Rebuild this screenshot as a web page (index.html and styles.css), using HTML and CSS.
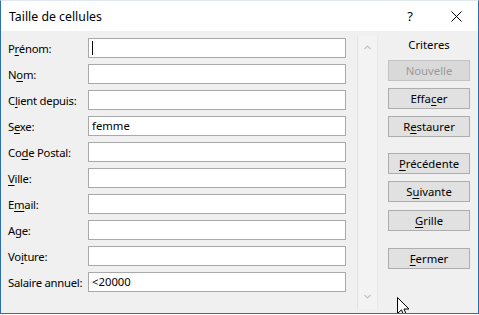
FILE: index.html
```html
<!DOCTYPE html>
<html lang="fr">
<head>
    <meta charset="UTF-8">
    <title>Taille de cellules</title>
    <link rel="stylesheet" href="styles.css">
</head>
<body>
    <div class="window">
        <!-- Title bar -->
        <div class="titlebar">
            <span class="title">Taille de cellules</span>
            <span class="help">?</span>
            <svg class="close" width="11" height="11" viewBox="0 0 11 11">
                <path d="M0.5 0.5 L10.5 10.5 M10.5 0.5 L0.5 10.5" stroke="#000" stroke-width="1" fill="none"/>
            </svg>
        </div>

        <div class="content">
            <!-- Form fields -->
            <div class="form">
                <div class="row"><label>P<u>r</u>énom:</label><div class="field"><span class="caret"></span></div></div>
                <div class="row"><label>N<u>o</u>m:</label><div class="field"></div></div>
                <div class="row"><label>C<u>l</u>ient depuis:</label><div class="field"></div></div>
                <div class="row"><label>S<u>e</u>xe:</label><div class="field">femme</div></div>
                <div class="row"><label>Co<u>d</u>e Postal:</label><div class="field"></div></div>
                <div class="row"><label><u>V</u>ille:</label><div class="field"></div></div>
                <div class="row"><label>E<u>m</u>ail:</label><div class="field"></div></div>
                <div class="row"><label>Age:</label><div class="field"></div></div>
                <div class="row"><label>Vo<u>i</u>ture:</label><div class="field"></div></div>
                <div class="row"><label>Salaire annuel:</label><div class="field">&lt;20000</div></div>
            </div>

            <!-- Record scrollbar -->
            <div class="scroll">
                <svg width="7" height="5" viewBox="0 0 7 5"><path d="M0.5 4 L3.5 1 L6.5 4" stroke="#c2c2c2" stroke-width="1.2" fill="none"/></svg>
                <svg width="7" height="5" viewBox="0 0 7 5"><path d="M0.5 1 L3.5 4 L6.5 1" stroke="#c2c2c2" stroke-width="1.2" fill="none"/></svg>
            </div>

            <!-- Buttons -->
            <div class="actions">
                <div class="criteria">Criteres</div>
                <button class="btn disabled">Nouvelle</button>
                <button class="btn">Effa<u>c</u>er</button>
                <button class="btn">R<u>e</u>staurer</button>
                <button class="btn group"><u>P</u>récédente</button>
                <button class="btn">S<u>u</u>ivante</button>
                <button class="btn"><u>G</u>rille</button>
                <button class="btn group"><u>F</u>ermer</button>
            </div>
        </div>

        <svg class="cursor" width="13" height="21" viewBox="0 0 13 21">
            <path d="M0.5 0.5 L0.5 16.5 L4.5 12.8 L7.2 19.2 L9.6 18.2 L7 12 L12 12 Z" fill="#fff" stroke="#000" stroke-width="1" stroke-linejoin="miter"/>
        </svg>
    </div>
</body>
</html>
```
FILE: styles.css
```css
/* ------ Windows dialog look ------ */
:root {
    --clr-frame: #2b6fb0;
    --clr-face: #f0f0f0;
    --clr-btn: #e1e1e1;
    --clr-btn-border: #adadad;
    --clr-field-border: #a9a9a9;
}
*,*::before,*::after{box-sizing:border-box;margin:0;padding:0;}
body{
    font-family:'Noto Sans','Liberation Sans',sans-serif;
    font-size:11px;
    color:#000;
    background:#fff;
}
.window{
    position:relative;
    width:479px;
    height:314px;
    border:1px solid var(--clr-frame);
    border-top-color:#dfe7ef;
    background:var(--clr-face);
    display:flex;
    flex-direction:column;
    overflow:hidden;
}
.titlebar{
    height:30px;
    background:#fff;
    display:flex;
    align-items:center;
    padding-left:8px;
    flex-shrink:0;
}
.title{font-size:12.3px;flex:1;}
.help{font-size:13px;margin-right:38px;}
.close{margin-right:16px;}

.content{display:flex;flex:1;}

.form{
    padding:7px 0 0 7px;
    display:flex;
    flex-direction:column;
    gap:6px;
}
.row{display:flex;align-items:center;height:20px;}
.row label{width:80px;white-space:nowrap;font-size:11.3px;letter-spacing:-0.25px;}
.field{
    width:258px;
    height:20px;
    background:#fff;
    border:1px solid var(--clr-field-border);
    padding:0 3px;
    line-height:18px;
    display:flex;
    align-items:center;
    font-size:11.3px;
}
.caret{display:block;width:1px;height:14px;background:#000;}

.scroll{
    margin:5px 0 4px 11px;
    width:21px;
    border-left:1px solid #e2e2e2;
    border-right:1px solid #e9e9e9;
    background:#f3f3f3;
    display:flex;
    flex-direction:column;
    justify-content:space-between;
    align-items:center;
    padding:9px 0 10px;
}

.actions{
    padding:6px 0 0 10px;
    display:flex;
    flex-direction:column;
    width:82px;
    box-sizing:content-box;
}
.criteria{text-align:center;line-height:16px;height:16px;margin-bottom:7px;font-size:11.3px;}
.btn{
    width:82px;
    height:21px;
    margin-bottom:7px;
    font-family:inherit;
    font-size:11.3px;
    color:#000;
    background:var(--clr-btn);
    border:1px solid var(--clr-btn-border);
    line-height:18px;
}
.btn.group{margin-top:9px;}
.btn:nth-child(6),.btn:nth-child(7){margin-bottom:8px;}
.btn.disabled{color:#9a9a9a;background:#d9d9d9;border-color:#c3c3c3;}
u{text-underline-offset:2px;}

.cursor{position:absolute;left:396px;top:296px;}
```
